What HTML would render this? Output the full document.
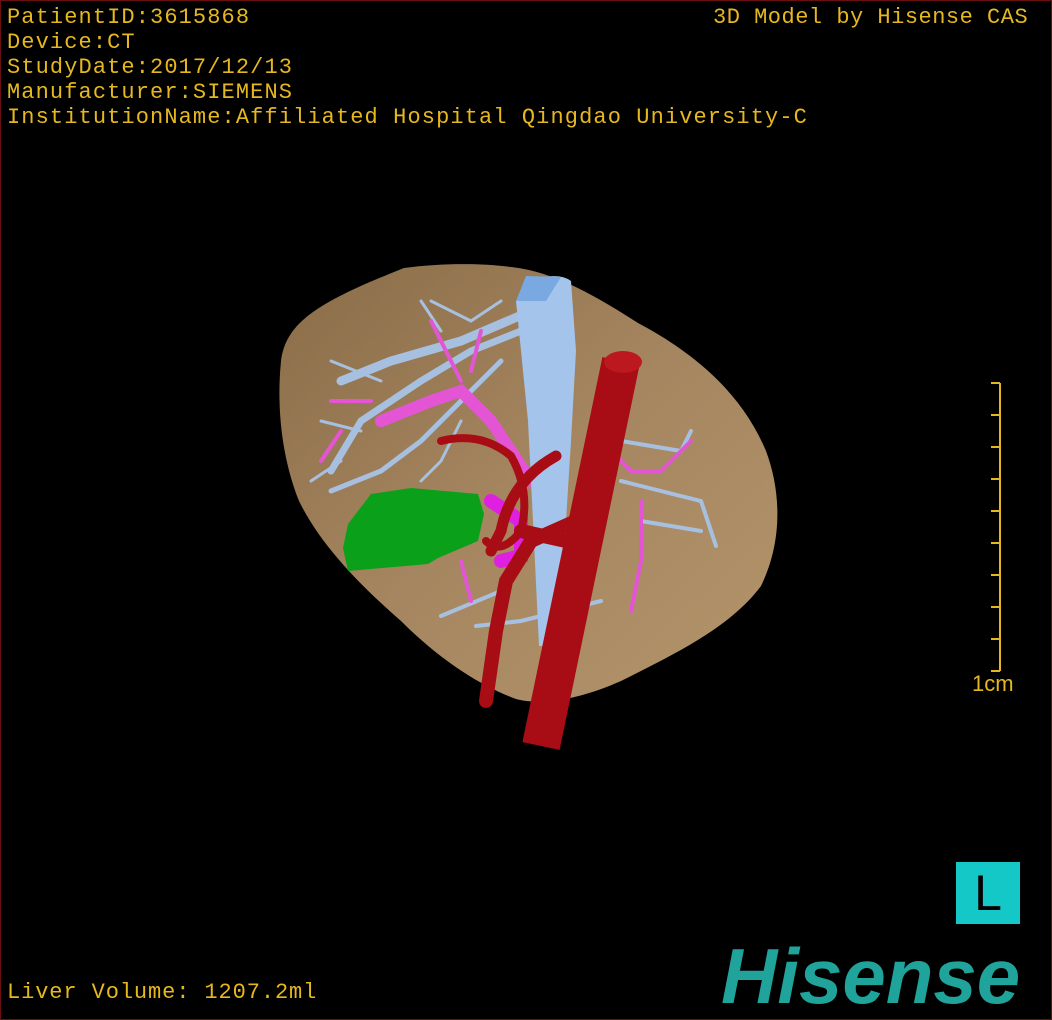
<!DOCTYPE html>
<html><head><meta charset="utf-8"><style>
html,body{margin:0;padding:0;background:#000;}
.wrap{position:relative;width:1052px;height:1020px;background:#000;overflow:hidden;box-sizing:border-box;border:1px solid #6a1010;}
.t{position:absolute;color:#e6b820;font-family:"Liberation Mono",monospace;font-size:22px;letter-spacing:1.1px;white-space:nowrap;line-height:25px;}
.logo{position:absolute;left:720px;top:936px;font-family:"Liberation Sans",sans-serif;font-weight:bold;font-style:italic;font-size:78px;color:#1fa39a;letter-spacing:0px;line-height:78px;}
.L{position:absolute;left:955px;top:861px;width:64px;height:62px;background:#14c8c8;color:#000;font-family:"Liberation Sans",sans-serif;font-size:50px;text-align:center;line-height:62px;}
</style></head><body><div class="wrap">
<div class="t" style="left:6px;top:4px">PatientID:3615868</div>
<div class="t" style="left:6px;top:29px">Device:CT</div>
<div class="t" style="left:6px;top:54px">StudyDate:2017/12/13</div>
<div class="t" style="left:6px;top:79px">Manufacturer:SIEMENS</div>
<div class="t" style="left:6px;top:104px">InstitutionName:Affiliated Hospital Qingdao University-C</div>
<div class="t" style="left:712px;top:4px;letter-spacing:0.5px">3D Model by Hisense CAS</div>
<div class="t" style="left:6px;top:979px;letter-spacing:0.9px">Liver Volume: 1207.2ml</div>
<div class="t" style="left:971px;top:670px;font-family:'Liberation Sans',sans-serif;letter-spacing:0">1cm</div>
<svg width="1052" height="1020" style="position:absolute;left:0;top:0">
<g stroke="#e6b820" stroke-width="2" fill="none">
<path d="M999 382V670"/>
<path d="M990 382H999M990 414H999M990 446H999M990 478H999M990 510H999M990 542H999M990 574H999M990 606H999M990 638H999M990 670H999"/>
</g>
<defs><linearGradient id="lg" x1="0" y1="0" x2="1" y2="1"><stop offset="0" stop-color="#8a6c48"/><stop offset="0.5" stop-color="#a58660"/><stop offset="1" stop-color="#b3946a"/></linearGradient></defs>
<path d="M403 267C440 262 480 262 510 266C545 270 580 285 637 322C690 350 740 390 765 450C780 490 782 540 760 585C730 625 680 650 620 680C580 698 540 705 515 698C480 685 440 660 400 620C360 585 320 545 298 500C282 460 275 410 280 360C285 320 320 300 403 267Z" fill="url(#lg)"/>
<g stroke="#a8c0e0" fill="none" stroke-linecap="round">
<path d="M530 310L460 340L390 360L340 380" stroke-width="9"/>
<path d="M520 330L470 350L420 380L360 420L330 470" stroke-width="7"/>
<path d="M500 360L460 400L420 440L380 470L330 490" stroke-width="5"/>
<path d="M430 300L470 320L500 300M440 330L420 300M380 380L330 360M360 430L320 420M340 460L310 480M460 420L440 460L420 480" stroke-width="3"/>
<path d="M620 440L680 450L690 430M620 480L700 500L715 545M640 520L700 530M600 600L520 620L475 625M500 590L440 615" stroke-width="4"/>
</g>
<g stroke="#e455d5" fill="none" stroke-linecap="round">
<path d="M380 420L430 400L460 390L490 420L510 450L530 480" stroke-width="12"/>
<path d="M430 320L450 360L460 380M480 330L470 370M330 400L370 400M340 430L320 460M600 440L630 470L660 470L690 440M640 500L640 560L630 610M460 560L470 600" stroke-width="4"/>
<path d="M490 500L520 520L520 555L500 560" stroke-width="14" stroke="#e020e0"/>
</g>
<path d="M538 277Q560 272 570 280L575 350L570 440L565 520L555 645L538 645L532 520L527 420L515 300Z" fill="#a4c4ec"/>
<path d="M515 300L525 275L560 276L545 300Z" fill="#7aa8e0"/>
<path d="M347 523L370 493L410 487L477 493L483 513L477 540L437 557L427 563L347 570L342 547Z" fill="#0aa01a"/>
<g stroke="#a80c14" fill="none" stroke-linecap="round">
<path d="M620 360L540 745" stroke-width="38" stroke-linecap="butt"/>
<path d="M575 520L530 540L505 580L495 630L485 700" stroke-width="14"/>
<path d="M555 455Q510 480 500 530L490 550" stroke-width="11"/>
<path d="M440 440Q480 430 510 455Q530 490 520 530Q500 555 485 540" stroke-width="8"/>
<path d="M565 540L520 530" stroke-width="14"/>
</g>
<ellipse cx="622" cy="361" rx="19" ry="11" fill="#bb1820"/>
</svg>
<div class="L">L</div>
<div class="logo">Hisense</div>
</div></body></html>
